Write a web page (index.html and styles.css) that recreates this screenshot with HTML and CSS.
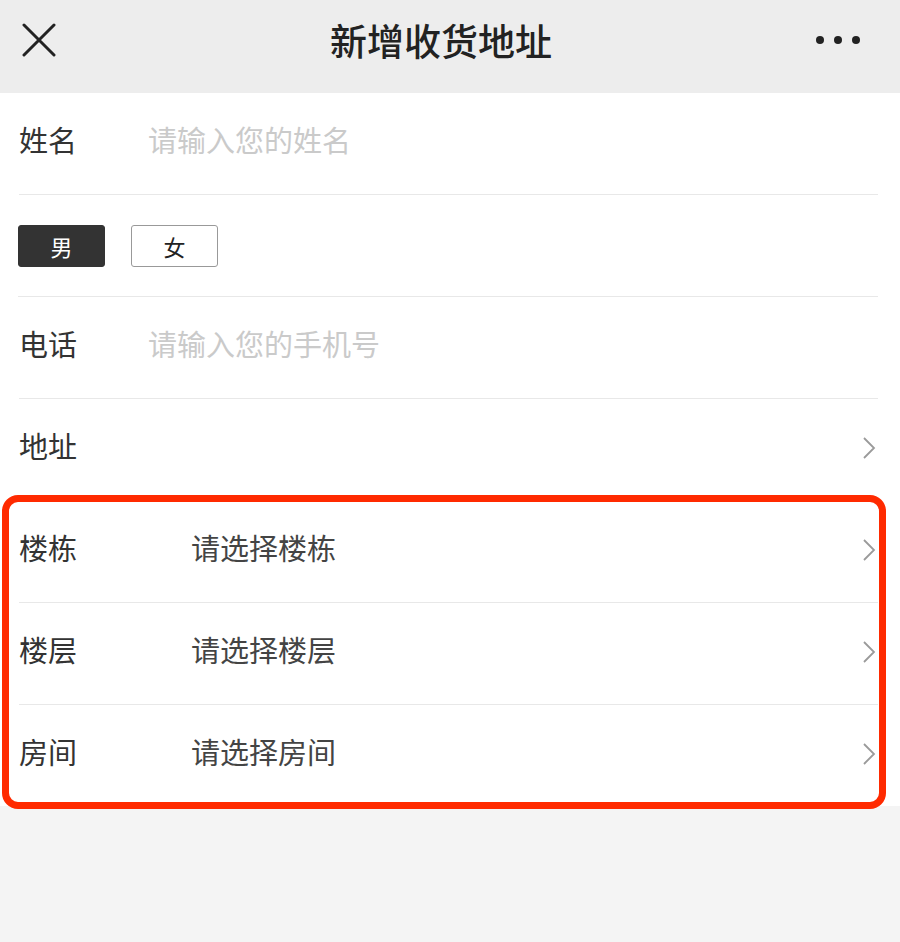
FILE: index.html
```html
<!DOCTYPE html>
<html lang="zh">
<head>
<meta charset="utf-8">
<link rel="stylesheet" href="styles.css">
</head>
<body>
<div class="page">
  <header class="topbar">
    <svg class="close" width="34" height="34" viewBox="0 0 34 34"><path d="M2 2 L32 32 M32 2 L2 32" stroke="#222" stroke-width="3" stroke-linecap="round"/></svg>
    <div class="title">新增收货地址</div>
    <div class="more"><span></span><span></span><span></span></div>
  </header>
  <main class="form">
    <div class="row">
      <span class="label">姓名</span>
      <span class="placeholder">请输入您的姓名</span>
    </div>
    <div class="row gender">
      <span class="btn active">男</span>
      <span class="btn">女</span>
    </div>
    <div class="row">
      <span class="label">电话</span>
      <span class="placeholder">请输入您的手机号</span>
    </div>
    <div class="row">
      <span class="label">地址</span>
      <span class="fill"></span>
      <svg class="chev" width="14" height="24" viewBox="0 0 14 24"><path d="M2 2 L12 12 L2 22" fill="none" stroke="#9a9a9a" stroke-width="1.8"/></svg>
    </div>
    <div class="group">
      <div class="row">
        <span class="label wide">楼栋</span>
        <span class="value">请选择楼栋</span>
        <svg class="chev" width="14" height="24" viewBox="0 0 14 24"><path d="M2 2 L12 12 L2 22" fill="none" stroke="#9a9a9a" stroke-width="1.8"/></svg>
      </div>
      <div class="row">
        <span class="label wide">楼层</span>
        <span class="value">请选择楼层</span>
        <svg class="chev" width="14" height="24" viewBox="0 0 14 24"><path d="M2 2 L12 12 L2 22" fill="none" stroke="#9a9a9a" stroke-width="1.8"/></svg>
      </div>
      <div class="row last">
        <span class="label wide">房间</span>
        <span class="value">请选择房间</span>
        <svg class="chev" width="14" height="24" viewBox="0 0 14 24"><path d="M2 2 L12 12 L2 22" fill="none" stroke="#9a9a9a" stroke-width="1.8"/></svg>
      </div>
    </div>
  </main>
</div>
</body>
</html>
```
FILE: styles.css
```css
html, body {
  margin: 0;
  padding: 0;
  background: #f4f4f4;
  font-family: "Noto Sans CJK SC", "Noto Sans", sans-serif;
}
.page {
  width: 900px;
  min-height: 942px;
  background: #f4f4f4;
}
.topbar {
  height: 93px;
  background: #ededed;
  display: flex;
  align-items: center;
  padding: 0 40px 0 22px;
  box-sizing: border-box;
}
.close {
  margin-top: -14px;
}
.title {
  flex: 1;
  text-align: center;
  font-size: 37px;
  font-weight: 500;
  color: #222;
  margin-top: -14px;
  padding-left: 10px;
}
.more {
  display: flex;
  gap: 10px;
  margin-top: -14px;
}
.more span {
  width: 8px;
  height: 8px;
  border-radius: 50%;
  background: #222;
}
.form {
  background: #fff;
}
.row {
  height: 102px;
  margin: 0 22px 0 19px;
  padding-bottom: 10px;
  border-bottom: 1px solid #e8e8e8;
  display: flex;
  align-items: center;
  font-size: 29px;
  box-sizing: border-box;
}
.row.last {
  border-bottom: none;
  height: 101px;
}
.label {
  width: 129px;
  color: #333;
  flex: none;
}
.label.wide {
  width: 172px;
}
.placeholder {
  color: #cacaca;
}
.value {
  flex: 1;
  color: #444;
}
.fill {
  flex: 1;
}
.chev {
  margin-right: 2px;
  margin-top: 6px;
}
.gender {
  gap: 26px;
  margin-left: 18px;
  padding-bottom: 0;
}
.btn {
  width: 87px;
  height: 42px;
  box-sizing: border-box;
  border: 1.5px solid #999;
  border-radius: 3px;
  display: flex;
  align-items: center;
  justify-content: center;
  font-size: 22px;
  color: #222;
}
.btn.active {
  background: #333;
  border-color: #333;
  color: #fff;
}
.group {
  position: relative;
}
.group::after {
  content: "";
  position: absolute;
  top: -6px;
  left: 2px;
  right: 14px;
  bottom: -3px;
  border: 7px solid #ff2a00;
  border-radius: 16px;
  pointer-events: none;
}
```
